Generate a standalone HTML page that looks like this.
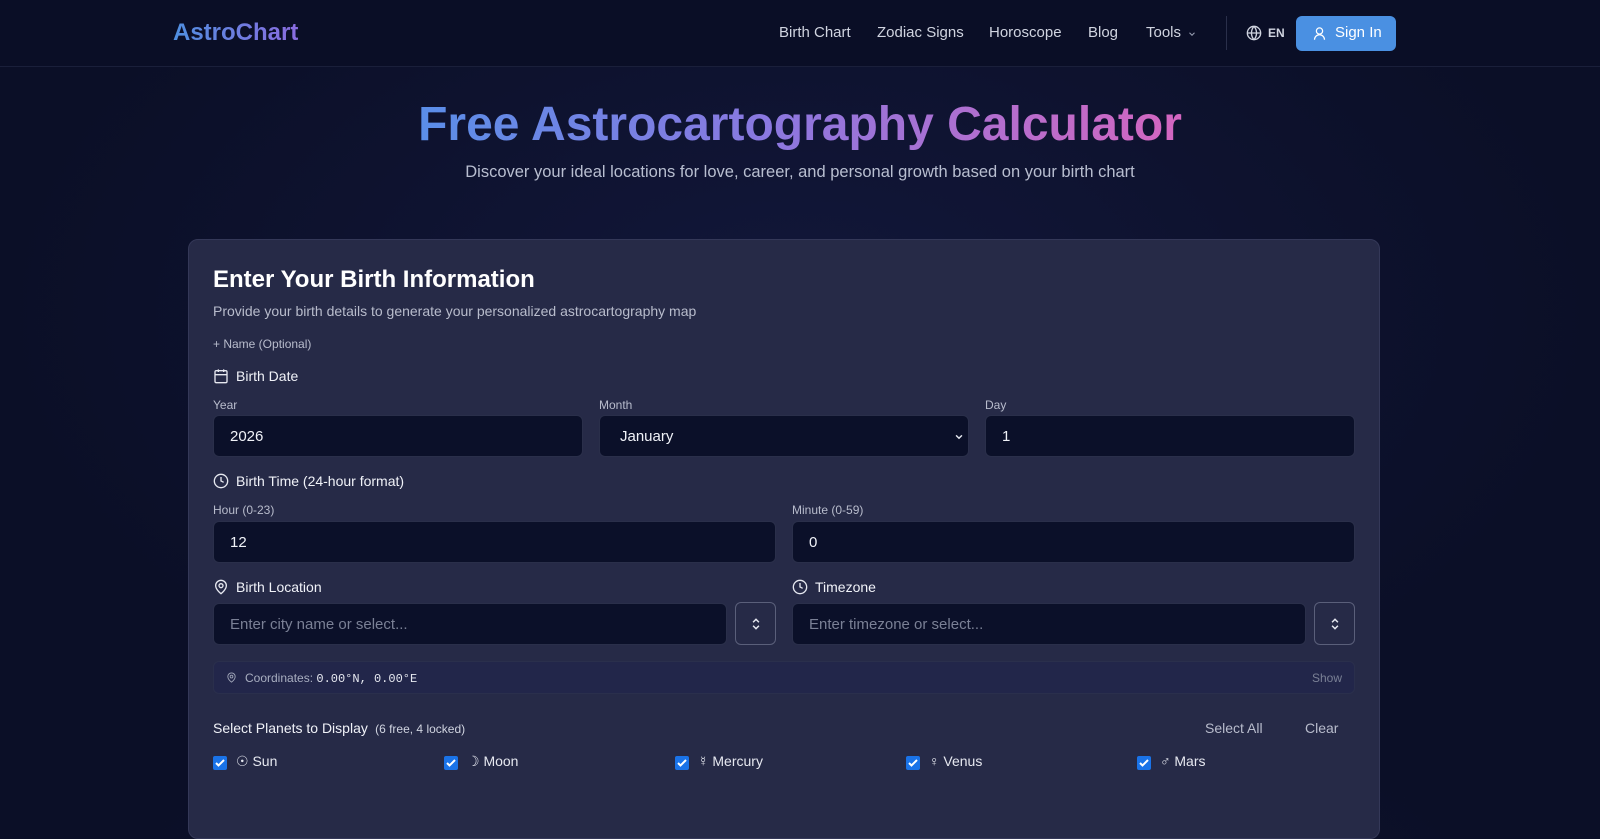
<!DOCTYPE html>
<html><head><meta charset="utf-8"><style>
*{box-sizing:border-box;margin:0;padding:0}
body{width:1600px;height:780px;overflow:hidden;background:radial-gradient(ellipse at 50% 40%,#12173a 0%,#0b0f27 70%);font-family:"Liberation Sans",sans-serif;color:#e6e8f0;position:relative}
.nav{position:absolute;top:0;left:0;right:0;height:67px;border-bottom:1px solid #1a1f3a;background:#0a0e26}
.logo{position:absolute;left:173px;top:19px;font-size:24px;font-weight:bold;background:linear-gradient(90deg,#4f8fe0,#8a6ce0);-webkit-background-clip:text;color:transparent}
.nl{position:absolute;top:24px;font-size:15px;color:#d0d4e0}
.sep{position:absolute;left:1226px;top:16px;width:1px;height:34px;background:#2a2f4a}
.btn{position:absolute;left:1296px;top:16px;width:100px;height:35px;background:#4a90e2;border-radius:6px;color:#fff;font-size:15px;padding:8px 0 0 39px}
h1{position:absolute;left:0;right:0;top:97px;text-align:center;font-size:48px;font-weight:bold}
h1 span{background:linear-gradient(90deg,#5a8ee8 0%,#8a78e0 45%,#d466c0 100%);-webkit-background-clip:text;color:transparent}
.sub{position:absolute;left:0;right:0;top:163px;text-align:center;font-size:16.5px;color:#b8bed0}
.card{position:absolute;left:188px;top:239px;width:1192px;height:600px;background:#262a47;border:1px solid #343858;border-radius:10px}
.a{position:absolute}
.lbl{font-size:12px;color:#b8bccc}
.h{font-size:14px;color:#f0f2f8}
.in{position:absolute;height:42px;background:#0b1029;border:1px solid #2a2f4a;border-radius:6px;font-size:15px;color:#f0f2f8;padding:12px 16px}
.ph{color:#7a8095}
.sq{position:absolute;width:41px;height:43px;border:1px solid #5a5f7a;border-radius:6px}
.sq svg{position:absolute;left:13px;top:14px}
.cb{position:absolute;top:516px;width:14px;height:14px;background:#1a73e8;border-radius:2px}
.cb svg{position:absolute;left:1px;top:1px}
.cbt{position:absolute;top:513px;font-size:14px;color:#e6e8f0}
</style></head><body>
<div class="nav">
<div class="logo">AstroChart</div>
<div class="nl" style="left:779px">Birth Chart</div>
<div class="nl" style="left:877px">Zodiac Signs</div>
<div class="nl" style="left:989px">Horoscope</div>
<div class="nl" style="left:1088px">Blog</div>
<div class="nl" style="left:1146px">Tools</div>
<svg class="a" style="left:1187px;top:29px" width="10" height="10" viewBox="0 0 24 24" fill="none" stroke="#9aa0b4" stroke-width="2.5"><path d="M6 9l6 6 6-6"/></svg>
<div class="sep"></div>
<svg class="a" style="left:1246px;top:25px" width="16" height="16" viewBox="0 0 24 24" fill="none" stroke="#d0d4e0" stroke-width="2"><circle cx="12" cy="12" r="10"/><path d="M2 12h20M12 2a15 15 0 0 1 0 20M12 2a15 15 0 0 0 0 20"/></svg>
<div class="nl" style="left:1268px;font-size:12px;top:26px;font-weight:bold">EN</div>
<div class="btn">Sign In</div>
<svg class="a" style="left:1312px;top:26px" width="15" height="15" viewBox="0 0 24 24" fill="none" stroke="#fff" stroke-width="2"><circle cx="12" cy="8" r="5"/><path d="M4 22a8 8 0 0 1 16 0"/></svg>
</div>
<h1><span>Free Astrocartography Calculator</span></h1>
<div class="sub">Discover your ideal locations for love, career, and personal growth based on your birth chart</div>
<div class="card">
<div class="a" style="left:24px;top:26px;font-size:24px;font-weight:bold;color:#fff">Enter Your Birth Information</div>
<div class="a" style="left:24px;top:63px;font-size:14px;color:#b8bccc">Provide your birth details to generate your personalized astrocartography map</div>
<div class="a lbl" style="left:24px;top:97px">+ Name (Optional)</div>
<svg class="a" style="left:24px;top:128px" width="16" height="16" viewBox="0 0 24 24" fill="none" stroke="#e6e8f0" stroke-width="2"><rect x="3" y="4" width="18" height="18" rx="2"/><path d="M16 2v4M8 2v4M3 10h18"/></svg>
<div class="a h" style="left:47px;top:128px">Birth Date</div>
<div class="a lbl" style="left:24px;top:158px">Year</div>
<div class="a lbl" style="left:410px;top:158px">Month</div>
<div class="a lbl" style="left:796px;top:158px">Day</div>
<div class="in" style="left:24px;top:175px;width:370px">2026</div>
<div class="in" style="left:410px;top:175px;width:370px;padding-left:20px">January<svg style="position:absolute;right:4px;top:16px" width="10" height="10" viewBox="0 0 24 24" fill="none" stroke="#e6e8f0" stroke-width="3.5"><path d="M5 8l7 7 7-7"/></svg></div>
<div class="in" style="left:796px;top:175px;width:370px">1</div>
<svg class="a" style="left:24px;top:233px" width="16" height="16" viewBox="0 0 24 24" fill="none" stroke="#e6e8f0" stroke-width="2"><circle cx="12" cy="12" r="10"/><path d="M12 6v6l4 2"/></svg>
<div class="a h" style="left:47px;top:233px">Birth Time (24-hour format)</div>
<div class="a lbl" style="left:24px;top:263px">Hour (0-23)</div>
<div class="a lbl" style="left:603px;top:263px">Minute (0-59)</div>
<div class="in" style="left:24px;top:281px;width:563px">12</div>
<div class="in" style="left:603px;top:281px;width:563px">0</div>
<svg class="a" style="left:24px;top:339px" width="16" height="16" viewBox="0 0 24 24" fill="none" stroke="#e6e8f0" stroke-width="2"><path d="M20 10c0 6-8 12-8 12s-8-6-8-12a8 8 0 0 1 16 0z"/><circle cx="12" cy="10" r="3"/></svg>
<div class="a h" style="left:47px;top:339px">Birth Location</div>
<svg class="a" style="left:603px;top:339px" width="16" height="16" viewBox="0 0 24 24" fill="none" stroke="#e6e8f0" stroke-width="2"><circle cx="12" cy="12" r="10"/><path d="M12 6v6l4 2"/></svg>
<div class="a h" style="left:626px;top:339px">Timezone</div>
<div class="in ph" style="left:24px;top:363px;width:514px">Enter city name or select...</div>
<div class="sq" style="left:546px;top:362px"><svg width="14" height="14" viewBox="0 0 24 24" fill="none" stroke="#e6e8f0" stroke-width="2.5"><path d="M7 9l5-5 5 5M7 15l5 5 5-5"/></svg></div>
<div class="in ph" style="left:603px;top:363px;width:514px">Enter timezone or select...</div>
<div class="sq" style="left:1125px;top:362px"><svg width="14" height="14" viewBox="0 0 24 24" fill="none" stroke="#e6e8f0" stroke-width="2.5"><path d="M7 9l5-5 5 5M7 15l5 5 5-5"/></svg></div>
<div class="a" style="left:24px;top:421px;width:1142px;height:33px;background:#22264a;border:1px solid #2a2f4c;border-radius:6px"></div>
<svg class="a" style="left:37px;top:432px" width="11" height="11" viewBox="0 0 24 24" fill="none" stroke="#a0a6b8" stroke-width="2"><path d="M20 10c0 6-8 12-8 12s-8-6-8-12a8 8 0 0 1 16 0z"/><circle cx="12" cy="10" r="3"/></svg>
<div class="a" style="left:56px;top:431px;font-size:12px;color:#a8aec0">Coordinates: <span style="font-family:'Liberation Mono',monospace;color:#e6e8f0">0.00°N, 0.00°E</span></div>
<div class="a" style="left:1123px;top:431px;font-size:12px;color:#7a8095">Show</div>
<div class="a h" style="left:24px;top:480px">Select Planets to Display <span style="font-size:12px;color:#d0d4e0">&nbsp;(6 free, 4 locked)</span></div>
<div class="a" style="left:1016px;top:480px;font-size:14px;color:#b8bccc">Select All</div>
<div class="a" style="left:1116px;top:480px;font-size:14px;color:#b8bccc">Clear</div>
<div class="cb" style="left:24px"><svg width="12" height="12" viewBox="0 0 24 24" fill="none" stroke="#fff" stroke-width="4"><path d="M4 12l5 5 11-11"/></svg></div><div class="cbt" style="left:47px">☉ Sun</div>
<div class="cb" style="left:255px"><svg width="12" height="12" viewBox="0 0 24 24" fill="none" stroke="#fff" stroke-width="4"><path d="M4 12l5 5 11-11"/></svg></div><div class="cbt" style="left:278px">☽ Moon</div>
<div class="cb" style="left:486px"><svg width="12" height="12" viewBox="0 0 24 24" fill="none" stroke="#fff" stroke-width="4"><path d="M4 12l5 5 11-11"/></svg></div><div class="cbt" style="left:509px">☿ Mercury</div>
<div class="cb" style="left:717px"><svg width="12" height="12" viewBox="0 0 24 24" fill="none" stroke="#fff" stroke-width="4"><path d="M4 12l5 5 11-11"/></svg></div><div class="cbt" style="left:740px">♀ Venus</div>
<div class="cb" style="left:948px"><svg width="12" height="12" viewBox="0 0 24 24" fill="none" stroke="#fff" stroke-width="4"><path d="M4 12l5 5 11-11"/></svg></div><div class="cbt" style="left:971px">♂ Mars</div>
</div>
</body></html>
